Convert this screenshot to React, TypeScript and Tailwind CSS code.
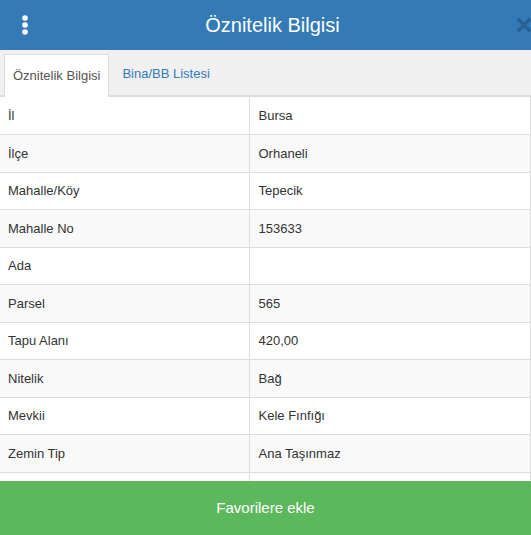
import React from "react";

const rows: [string, string][] = [
  ["İl", "Bursa"],
  ["İlçe", "Orhaneli"],
  ["Mahalle/Köy", "Tepecik"],
  ["Mahalle No", "153633"],
  ["Ada", ""],
  ["Parsel", "565"],
  ["Tapu Alanı", "420,00"],
  ["Nitelik", "Bağ"],
  ["Mevkii", "Kele Fınfığı"],
  ["Zemin Tip", "Ana Taşınmaz"],
  ["", ""],
];

export default function App() {
  return (
    <div
      className="w-[531px] h-[535px] flex flex-col overflow-hidden bg-white text-[#333]"
      style={{ fontFamily: '"Liberation Sans", Arial, sans-serif' }}
    >
      {/* Header */}
      <header className="h-[50px] shrink-0 flex items-center bg-[#337ab7] text-white">
        <div className="w-[48px] flex justify-center pl-[1px]">
          <svg width="8" height="20" viewBox="0 0 8 20" fill="#fff">
            <circle cx="4" cy="3" r="2.8" />
            <circle cx="4" cy="10" r="2.8" />
            <circle cx="4" cy="17" r="2.8" />
          </svg>
        </div>
        <h1 className="flex-1 text-center text-[20px] leading-[24px] font-normal">
          Öznitelik Bilgisi
        </h1>
        <div className="w-[34px] h-full flex items-center pl-[20px]">
          <svg width="14" height="14" viewBox="0 0 14 14" className="shrink-0 mt-[-1px]">
            <path
              d="M2 2 L12 12 M12 2 L2 12"
              stroke="rgba(0,0,0,0.2)"
              strokeWidth="3.6"
              strokeLinecap="square"
            />
          </svg>
        </div>
      </header>

      {/* Tabs */}
      <nav className="h-[47px] shrink-0 bg-[#f0f0f0] flex items-end pl-[4px] border-b-2 border-[#dddddd]">
        <button className="h-[43px] px-[8px] bg-white border border-b-0 border-[#dddddd] text-[13px] text-[#555] mb-[-2px]">
          Öznitelik Bilgisi
        </button>
        <button className="h-[43px] px-[12px] text-[13px] text-[#337ab7] ml-[1px]">
          Bina/BB Listesi
        </button>
      </nav>

      {/* Table */}
      <div className="flex-1 overflow-hidden">
        <table className="w-full border-collapse text-[13px]">
          <tbody>
            {rows.map(([k, v], i) => (
              <tr key={i} className={i % 2 === 1 ? "bg-[#f9f9f9]" : "bg-white"}>
                <td className="w-[249px] h-[37.5px] pl-[8px] border-b border-[#dddddd] align-middle">
                  {k}
                </td>
                <td className="h-[37.5px] pl-[9px] border-l border-r border-b border-[#dddddd] align-middle">
                  {v}
                </td>
              </tr>
            ))}
          </tbody>
        </table>
      </div>

      {/* Footer button */}
      <button className="h-[54px] shrink-0 w-full bg-[#5cb85c] text-white text-[15px]">
        Favorilere ekle
      </button>
    </div>
  );
}
